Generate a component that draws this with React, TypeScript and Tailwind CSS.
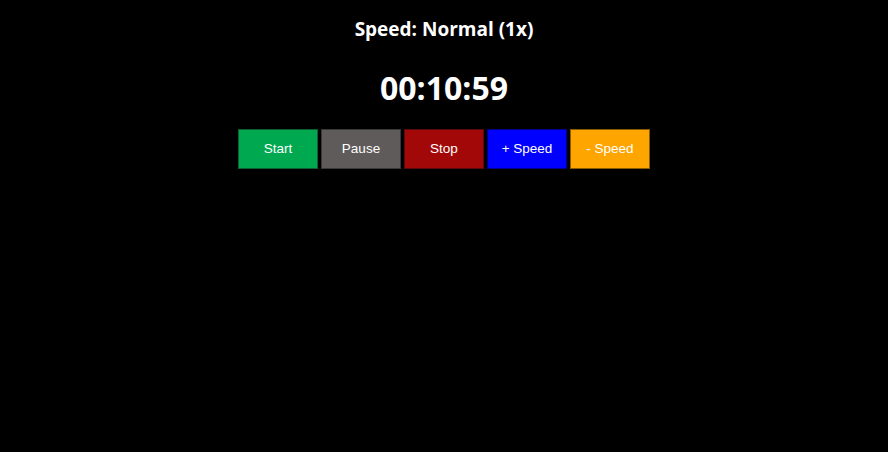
const btns = [
  { label: "Start", cls: "bg-[#00a84f] border-[#0d5f30]" },
  { label: "Pause", cls: "bg-[#5f5b5a] border-[#3a3838]" },
  { label: "Stop", cls: "bg-[#a30808] border-[#5a0a0a]" },
  { label: "+ Speed", cls: "bg-[#0000ff] border-[#00008a]" },
  { label: "- Speed", cls: "bg-[#ffa500] border-[#8a5a00]" },
];

export default function App() {
  return (
    <div className="w-[888px] h-[452px] bg-black flex flex-col items-center text-white font-['Open_Sans','Noto_Sans',sans-serif]">
      <div className="mt-[16px] h-[26px] text-[19px] font-bold leading-[26px]">Speed: Normal (1x)</div>
      <div className="mt-[26px] h-[40px] text-[32px] font-bold leading-[40px]">00:10:59</div>
      <div className="mt-[21px] flex gap-[3px]">
        {btns.map((b) => (
          <div
            key={b.label}
            className={`w-[80px] h-[40px] border flex items-center justify-center text-[13.5px] text-white font-['Liberation_Sans',Arial,sans-serif] ${b.cls}`}
          >
            {b.label}
          </div>
        ))}
      </div>
    </div>
  );
}
